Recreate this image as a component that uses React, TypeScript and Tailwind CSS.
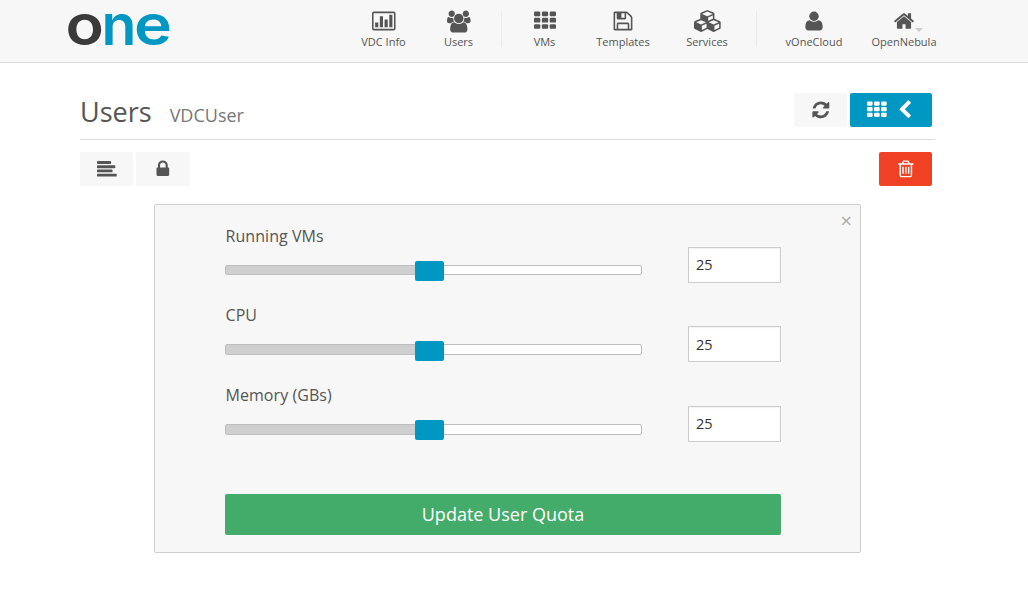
import { useState } from "react";
import type { ReactNode } from "react";

type IconProps = { em: number; w?: number; y?: number; className?: string; children: ReactNode };

/** Icon on a 1792-unit em square; `w` is the glyph's width in the same units. */
function Icon({ em, w = 1792, y = 0, className = "", children }: IconProps) {
  return (
    <svg
      viewBox={`0 ${y} ${w} 1792`}
      width={(em * w) / 1792}
      height={em}
      fill="currentColor"
      className={`shrink-0 overflow-visible ${className}`}
      aria-hidden="true"
    >
      {children}
    </svg>
  );
}

const ThGlyph = () => (
  <>
    {[128, 640, 1152].map((y) =>
      [0, 640, 1280].map((x) => <rect key={`${x}-${y}`} x={x} y={y} width="512" height="384" rx="96" />)
    )}
  </>
);

const ChartGlyph = () => (
  <>
    <rect x="64" y="192" width="1792" height="1408" rx="96" fill="none" stroke="currentColor" strokeWidth="128" />
    <path d="M256 1024h256v384h-256zM640 512h256v896h-256zM1024 768h256v640h-256zM1408 384h256v1024h-256z" />
  </>
);

const UsersGlyph = () => (
  <path d="M593 640q-162 5-265 128h-134q-82 0-138-40.5t-56-118.5q0-353 124-353 6 0 43.5 21t97.5 42.5 119 21.5q67 0 133-23-5 37-5 66 0 139 81 256zm1071 637q0 120-73 189.5t-194 69.5h-874q-121 0-194-69.5t-73-189.5q0-53 3.5-103.5t14-109 26.5-108.5 43-97.5 62-81 85.5-53.5 111.5-20q10 0 43 21.5t73 48 107 48 135 21.5 135-21.5 107-48 73-48 43-21.5q61 0 111.5 20t85.5 53.5 62 81 43 97.5 26.5 108.5 14 109 3.5 103.5zm-1024-1277q0 106-75 181t-181 75-181-75-75-181 75-181 181-75 181 75 75 181zm704 384q0 159-112.5 271.5t-271.5 112.5-271.5-112.5-112.5-271.5 112.5-271.5 271.5-112.5 271.5 112.5 112.5 271.5zm576 225q0 78-56 118.5t-138 40.5h-134q-103-123-265-128 81-117 81-256 0-29-5-66 66 23 133 23 59 0 119-21.5t97.5-42.5 43.5-21q124 0 124 353zm-128-609q0 106-75 181t-181 75-181-75-75-181 75-181 181-75 181 75 75 181z" />
);

const FloppyGlyph = () => (
  <path d="M512 1536h768v-384h-768v384zm896 0h128v-896q0-14-10-38.5t-20-34.5l-281-281q-10-10-34-20t-39-10v416q0 40-28 68t-68 28h-576q-40 0-68-28t-28-68v-416h-128v1280h128v-416q0-40 28-68t68-28h832q40 0 68 28t28 68v416zm-384-928v-320q0-13-9.5-22.5t-22.5-9.5h-192q-13 0-22.5 9.5t-9.5 22.5v320q0 13 9.5 22.5t22.5 9.5h192q13 0 22.5-9.5t9.5-22.5zm640 32v928q0 40-28 68t-68 28h-1344q-40 0-68-28t-28-68v-1344q0-40 28-68t68-28h928q40 0 88 20t76 48l280 280q28 28 48 76t20 88z" />
);

const CubesGlyph = () => (
  <path d="M640 1632l384-192v-314l-384 164v342zm-64-454l404-173-404-173-404 173zm1088 454l384-192v-314l-384 164v342zm-64-454l404-173-404-173-404 173zm-448-293l384-165v-266l-384 164v267zm-64-379l441-189-441-189-441 189zm1088 518v416q0 36-19 67t-52 47l-448 224q-25 14-57 14t-57-14l-448-224q-4-2-7-4-2 2-7 4l-448 224q-25 14-57 14t-57-14l-448-224q-33-16-52-47t-19-67v-416q0-38 21.5-70t56.5-48l434-186v-400q0-38 21.5-70t56.5-48l448-192q23-10 50-10t50 10l448 192q35 16 56.5 48t21.5 70v400l434 186q36 16 57 48t21 70z" />
);

const UserGlyph = () => (
  <>
    <path
      transform="translate(-89.6 0) scale(1.1 1)"
      d="M1536 1399q0 109-62.5 187t-150.5 78h-854q-88 0-150.5-78t-62.5-187q0-85 8.5-160.5t31.5-152 58.5-131 94-89 134.5-34.5q131 128 313 128t313-128q76 0 134.5 34.5t94 89 58.5 131 31.5 152 8.5 160.5z"
    />
    <circle cx="896" cy="512" r="384" />
  </>
);

const HomeGlyph = () => (
  <path d="M1472 992v480q0 26-19 45t-45 19h-384v-384h-256v384h-384q-26 0-45-19t-19-45v-480q0-1 .5-3t.5-3l575-474 575 474q1 2 1 6zm223-69l-62 74q-8 9-21 11h-3q-13 0-21-7l-692-577-692 577q-12 8-24 7-13-2-21-11l-62-74q-8-10-7-23.5t11-21.5l719-599q32-26 76-26t76 26l244 204v-195q0-14 9-23t23-9h192q14 0 23 9t9 23v408l219 182q10 8 11 21.5t-7 23.5z" />
);

const RefreshGlyph = () => (
  <path d="M1639 1056q0 5-1 7-64 268-268 434.5t-478 166.5q-146 0-282.5-55t-243.5-157l-129 129q-19 19-45 19t-45-19-19-45v-448q0-26 19-45t45-19h448q26 0 45 19t19 45-19 45l-137 137q71 66 161 102t187 36q134 0 250-65t186-179q11-17 53-117 8-23 30-23h192q13 0 22.5 9.5t9.5 22.5zm25-800v448q0 26-19 45t-45 19h-448q-26 0-45-19t-19-45 19-45l138-138q-148-137-349-137-134 0-250 65t-186 179q-11 17-53 117-8 23-30 23h-199q-13 0-22.5-9.5t-9.5-22.5v-7q65-268 270-434.5t480-166.5q146 0 284 55.5t245 156.5l130-129q19-19 45-19t45 19 19 45z" />
);

const ChevronGlyph = () => (
  <path d="M1427 301l-531 531 531 531q19 19 19 45t-19 45l-166 166q-19 19-45 19t-45-19l-742-742q-19-19-19-45t19-45l742-742q19-19 45-19t45 19l166 166q19 19 19 45t-19 45z" />
);

const AlignGlyph = () => (
  <>
    <rect x="0" y="192" width="1280" height="256" rx="64" />
    <rect x="0" y="576" width="1664" height="256" rx="64" />
    <rect x="0" y="960" width="1408" height="256" rx="64" />
    <rect x="0" y="1344" width="1792" height="256" rx="64" />
  </>
);

const LockGlyph = () => (
  <path d="M640 768h512v-192q0-106-75-181t-181-75-181 75-75 181v192zm832 96v576q0 40-28 68t-68 28h-960q-40 0-68-28t-28-68v-576q0-40 28-68t68-28h32v-192q0-184 132-316t316-132 316 132 132 316v192h32q40 0 68 28t28 68z" />
);

const TrashGlyph = () => (
  <path d="M704 736v576q0 14-9 23t-23 9h-64q-14 0-23-9t-9-23v-576q0-14 9-23t23-9h64q14 0 23 9t9 23zm256 0v576q0 14-9 23t-23 9h-64q-14 0-23-9t-9-23v-576q0-14 9-23t23-9h64q14 0 23 9t9 23zm256 0v576q0 14-9 23t-23 9h-64q-14 0-23-9t-9-23v-576q0-14 9-23t23-9h64q14 0 23 9t9 23zm128 724v-948h-896v948q0 22 7 40.5t14.5 27 10.5 8.5h832q3 0 10.5-8.5t14.5-27 7-40.5zm-672-1076h448l-48-117q-7-9-17-11h-317q-10 2-17 11zm928 32v64q0 14-9 23t-23 9h-96v948q0 83-47 143.5t-113 60.5h-832q-66 0-113-58.5t-47-141.5v-952h-96q-14 0-23-9t-9-23v-64q0-14 9-23t23-9h309l70-167q15-37 54-63t79-26h320q40 0 79 26t54 63l70 167h309q14 0 23 9t9 23z" />
);

function Logo() {
  return (
    <svg
      width="106"
      height="62"
      viewBox="0 0 106 62"
      className="ml-[66px] shrink-0 overflow-visible font-['Inter',sans-serif] text-[56px] font-semibold"
      aria-label="one"
    >
      <text x="-0.5" y="44.9" textLength="38.4" lengthAdjust="spacingAndGlyphs" fill="#3a3a3a">o</text>
      <text x="35.5" y="44.9" textLength="34.9" lengthAdjust="spacingAndGlyphs" fill="#0098c3">n</text>
      <text x="68.1" y="44.9" textLength="38" lengthAdjust="spacingAndGlyphs" fill="#0098c3">e</text>
    </svg>
  );
}

function NavItem({ label, width, children }: { label: string; width: string; children: ReactNode }) {
  return (
    <a className={`flex flex-col items-center pt-[10px] ${width}`}>
      {children}
      <span className="mt-[2px] text-[11px] leading-4 whitespace-nowrap">{label}</span>
    </a>
  );
}

function Header() {
  return (
    <header className="flex h-[63px] border-b border-[#dddddd] bg-[#f7f7f7]">
      <Logo />
      <nav className="ml-[173px] flex">
        <NavItem label="VDC Info" width="w-[77px]">
          <Icon em={22} w={1920}><ChartGlyph /></Icon>
        </NavItem>
        <NavItem label="Users" width="w-[73px]">
          <Icon em={22} w={1920} y={-304}><UsersGlyph /></Icon>
        </NavItem>
        <div className="mt-[11px] ml-[6px] h-9 w-px bg-[#ebebeb]" />
        <NavItem label="VMs" width="w-[85px]">
          <Icon em={22}><ThGlyph /></Icon>
        </NavItem>
        <NavItem label="Templates" width="w-[72px]">
          <Icon em={22}><FloppyGlyph /></Icon>
        </NavItem>
        <NavItem label="Services" width="w-[96px]">
          <Icon em={22} w={2176}><CubesGlyph /></Icon>
        </NavItem>
        <div className="mt-[11px] ml-[1px] h-9 w-px bg-[#ebebeb]" />
        <NavItem label="vOneCloud" width="w-[114px]">
          <Icon em={22}><UserGlyph /></Icon>
        </NavItem>
        <NavItem label="OpenNebula" width="w-[66px]">
          <span className="relative">
            <Icon em={22} className="block"><HomeGlyph /></Icon>
            <span className="absolute top-[18px] left-[22px] border-x-4 border-t-4 border-x-transparent border-t-[#cccccc]" />
          </span>
        </NavItem>
      </nav>
    </header>
  );
}

function ToolButton({ className, label, children }: { className: string; label: string; children: ReactNode }) {
  return (
    <button aria-label={label} className={`flex h-[34px] items-center justify-center rounded-[2px] ${className}`}>
      {children}
    </button>
  );
}

type QuotaProps = { label: string; height: string; track: string; thumbTop: string; inputPad: string };

function QuotaRow({ label, height, track, thumbTop, inputPad }: QuotaProps) {
  const [value, setValue] = useState("25");
  return (
    <div className={`flex justify-between ${height}`}>
      <div className="w-[417px]">
        <div className="pl-[0.5px] text-base leading-5 tracking-[0.06px]">{label}</div>
        <div className={`relative mt-[19px] rounded-[2px] border border-[#bdbdbd] bg-white ${track}`}>
          <div className="h-full w-[195px] bg-[#cfcfcf]" />
          <div className={`absolute left-[189px] h-5 w-[29px] rounded-[2px] bg-[#0098c3] ${thumbTop}`} />
        </div>
      </div>
      <input
        value={value}
        onChange={(e) => setValue(e.target.value)}
        aria-label={label}
        className={`mt-[21px] h-9 w-[93px] border border-[#cccccc] bg-white pl-[7px] text-[14.5px] text-[#333333] shadow-[inset_0_1px_2px_rgba(0,0,0,0.06)] outline-none ${inputPad}`}
      />
    </div>
  );
}

export default function App() {
  return (
    <div className="h-[590px] w-[1028px] overflow-hidden bg-white font-['Open_Sans',sans-serif] text-[#555555]">
      <Header />
      <main className="ml-[80px] w-[855px]">
        <div className="flex h-[77px] border-b border-[#dddddd] pt-[30px] pr-[3px]">
          <h1 className="flex flex-1 items-baseline leading-[38px]">
            <span className="text-[27px]">Users</span>
            <span className="ml-[18px] text-lg text-[#777777]">VDCUser</span>
          </h1>
          <ToolButton label="Refresh" className="w-[53px] bg-[#f7f7f7]">
            <Icon em={19.7}><RefreshGlyph /></Icon>
          </ToolButton>
          <ToolButton label="Views" className="ml-[3px] w-[82px] gap-2 bg-[#0098c3] text-white">
            <Icon em={19.7}><ThGlyph /></Icon>
            <Icon em={19.7}><ChevronGlyph /></Icon>
          </ToolButton>
        </div>
        <div className="flex pt-3 pr-[3px]">
          <ToolButton label="Info" className="w-[53px] bg-[#f7f7f7]">
            <Icon em={19.7}><AlignGlyph /></Icon>
          </ToolButton>
          <ToolButton label="Password" className="ml-[3px] w-[54px] bg-[#f7f7f7]">
            <Icon em={19.7}><LockGlyph /></Icon>
          </ToolButton>
          <ToolButton label="Delete" className="ml-auto w-[53px] bg-[#f04124] text-white">
            <Icon em={19.7}><TrashGlyph /></Icon>
          </ToolButton>
        </div>
        <section className="relative mt-[18px] ml-[74px] h-[349px] w-[707px] rounded-[2px] border border-[#cfcfcf] bg-[#f7f7f7] pt-[21px] pl-[70px]">
          <button aria-label="Close" className="absolute top-[6px] right-[8px] text-[20px] leading-5 text-[#aaaaaa]">×</button>
          <div className="w-[556px]">
            <QuotaRow label="Running VMs" height="h-[79px]" track="h-[10px]" thumbTop="top-[-5px]" inputPad="pb-[2px]" />
            <QuotaRow label="CPU" height="h-[80px]" track="h-[11px]" thumbTop="top-[-4px]" inputPad="pb-0" />
            <QuotaRow label="Memory (GBs)" height="h-[80px]" track="h-[11px]" thumbTop="top-[-5px]" inputPad="pb-[2px]" />
            <button className="mt-[29px] h-[41px] w-full rounded-[2px] bg-[#43ac6a] pb-[2px] text-lg text-white">
              Update User Quota
            </button>
          </div>
        </section>
      </main>
    </div>
  );
}
